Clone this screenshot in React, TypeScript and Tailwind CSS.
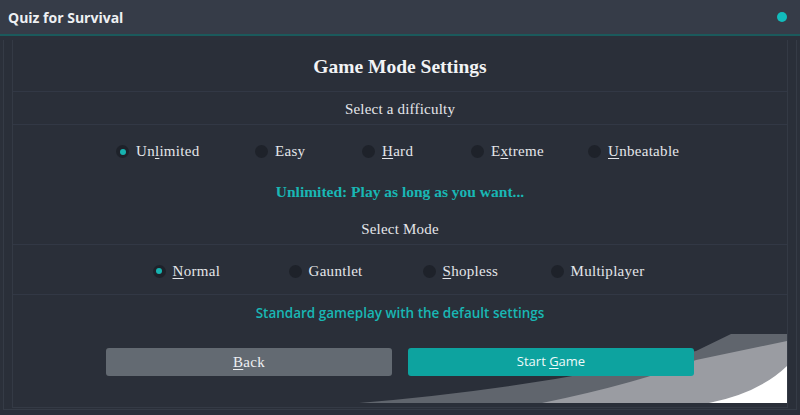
import React from "react";

const serif = "font-['Liberation_Serif','Times_New_Roman',serif]";
const sans = "font-['Open_Sans','Liberation_Sans',sans-serif]";

interface RadioProps {
  label: string;
  mnemonic?: number;
  checked?: boolean;
  width?: string;
}

const Radio: React.FC<RadioProps> = ({ label, mnemonic = -1, checked = false, width = "" }) => {
  const parts =
    mnemonic >= 0 ? (
      <>
        {label.slice(0, mnemonic)}
        <span className="underline underline-offset-2">{label[mnemonic]}</span>
        {label.slice(mnemonic + 1)}
      </>
    ) : (
      label
    );
  return (
    <div className={`flex shrink-0 items-center gap-[7px] ${width}`}>
      <span className="flex h-[13px] w-[13px] shrink-0 items-center justify-center rounded-full bg-[#1e222a]">
        {checked && <span className="h-[6px] w-[6px] rounded-full bg-[#17b3b0]" />}
      </span>
      <span className={`${serif} whitespace-nowrap text-[15px] tracking-[0.3px] text-[#e4e6ea]`}>{parts}</span>
    </div>
  );
};

const Corner: React.FC = () => (
  <svg
    className="pointer-events-none absolute bottom-[4px] right-0"
    width="428"
    height="80"
    viewBox="360 320 428 80"
  >
    <path d="M360 400 Q540 385 697 348 L732 331 L788 331 L788 400 Z" fill="#60656d" />
    <path d="M543 400 Q640 380 697 357 L788 338 L788 400 Z" fill="#9a9ca2" />
    <path d="M710 400 Q760 390 788 363 L788 400 Z" fill="#ffffff" />
  </svg>
);

export default function App() {
  return (
    <div className="flex h-[415px] w-[800px] flex-col overflow-hidden bg-[#2b303a]">
      {/* Title bar */}
      <div className="flex h-[36px] shrink-0 items-center justify-between border-b-2 border-[#1b5a5c] bg-[#363c48] pl-[8px] pr-[13px]">
        <span className={`${sans} text-[14px] font-bold text-[#eef0f3]`}>Quiz for Survival</span>
        <span className="h-[10px] w-[10px] rounded-full bg-[#12bcbc]" />
      </div>

      {/* Body */}
      <div className="flex flex-1 flex-col px-[3px] pb-[5px] pt-[4px]">
        <div className="flex flex-1 flex-col border-x border-b border-[#353b46] bg-[#2a2f39] pl-[8px] pr-[8px] pb-[1px]">
          <div className="relative flex flex-1 flex-col border-x border-b border-[#343a45]">
            <div className="flex h-[52px] items-center justify-center border-b border-[#323845] pt-[2px]">
              <h1 className={`${serif} text-[19.5px] font-bold text-[#f2f3f5]`}>Game Mode Settings</h1>
            </div>
            <div className="flex h-[33px] items-center justify-center border-b border-[#323845] pt-[2px]">
              <span className={`${serif} text-[15px] tracking-[0.2px] text-[#e4e6ea]`}>Select a difficulty</span>
            </div>
            <div className="flex h-[52px] items-center justify-center pt-[1px]">
              <Radio label="Unlimited" mnemonic={2} checked width="w-[139px]" />
              <Radio label="Easy" width="w-[107px]" />
              <Radio label="Hard" mnemonic={0} width="w-[109px]" />
              <Radio label="Extreme" mnemonic={1} width="w-[117px]" />
              <Radio label="Unbeatable" mnemonic={0} width="w-[96px]" />
            </div>
            <div className="flex h-[28px] items-center justify-center pt-[2px]">
              <span className={`${serif} text-[15.5px] font-bold text-[#19b7b4]`}>
                Unlimited: Play as long as you want...
              </span>
            </div>
            <div className="flex h-[40px] items-center justify-center border-b border-[#323845] pt-[10px]">
              <span className={`${serif} text-[15px] tracking-[0.2px] text-[#e4e6ea]`}>Select Mode</span>
            </div>
            <div className="flex h-[50px] items-center justify-center border-b border-[#323845] pt-[3px]">
              <Radio label="Normal" mnemonic={0} checked width="w-[136px]" />
              <Radio label="Gauntlet" width="w-[134px]" />
              <Radio label="Shopless" mnemonic={0} width="w-[128px]" />
              <Radio label="Multiplayer" width="w-[97px]" />
            </div>
            <div className="flex h-[36px] items-center justify-center">
              <span className={`${sans} text-[13.5px] font-semibold text-[#19b7b4]`}>
                Standard gameplay with the default settings
              </span>
            </div>
            <Corner />
            <div className="relative flex flex-1 items-start justify-center gap-[16px] pt-[17px]">
              <button className={`${serif} h-[28px] w-[286px] rounded-[3px] bg-[#636a72] text-[15px] tracking-[0.3px] text-[#eef0f2]`}>
                <span className="underline underline-offset-2">B</span>ack
              </button>
              <button className={`${sans} h-[28px] w-[286px] rounded-[3px] bg-[#0da39f] text-[13px] text-[#eefafa]`}>
                Start <span className="underline underline-offset-2">G</span>ame
              </button>
            </div>
          </div>
        </div>
      </div>
    </div>
  );
}
